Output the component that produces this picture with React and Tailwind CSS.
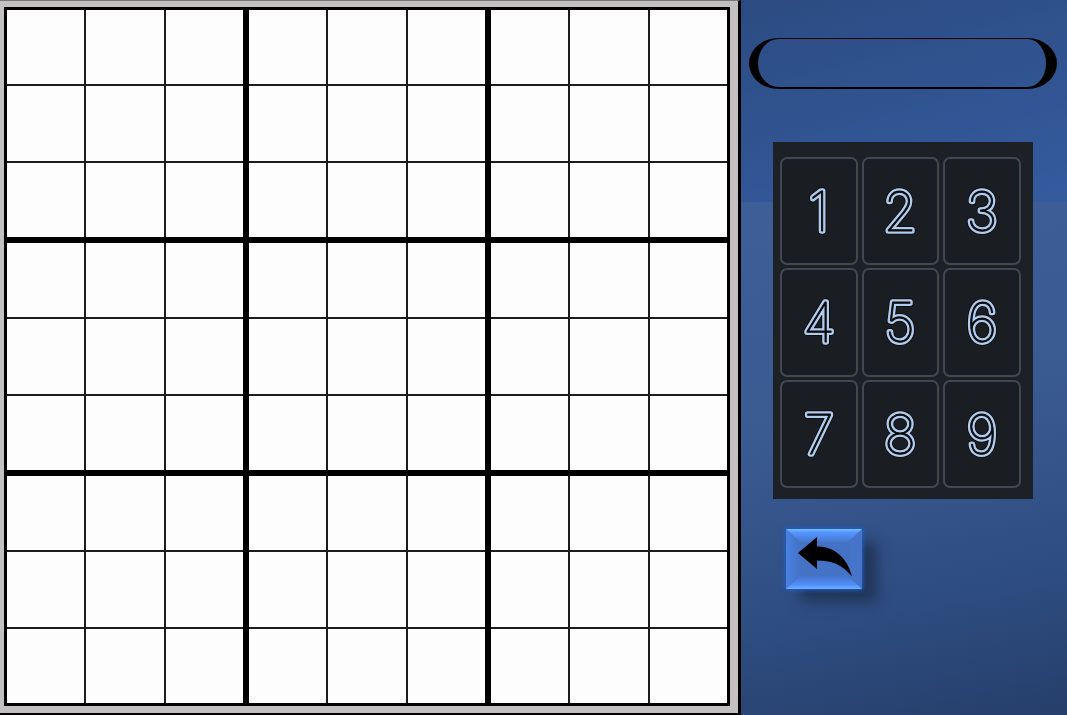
import { useState } from "react";

const THREE = [0, 1, 2];
const DIGITS = [1, 2, 3, 4, 5, 6, 7, 8, 9];

function Box({ box, values, selected, onSelect }) {
  return (
    <div className="grid min-h-0 min-w-0 grid-cols-3 grid-rows-3 gap-[2px] bg-[#1c1c1c]">
      {DIGITS.map((_, i) => {
        const row = Math.floor(box / 3) * 3 + Math.floor(i / 3);
        const col = (box % 3) * 3 + (i % 3);
        const id = row * 9 + col;
        return (
          <button
            key={id}
            type="button"
            aria-label={`Row ${row + 1}, column ${col + 1}`}
            aria-pressed={selected === id}
            onClick={() => onSelect(id)}
            className="min-h-0 min-w-0 bg-[#fdfdfd] font-['Inter',sans-serif] text-4xl text-black aria-pressed:bg-blue-100"
          >
            {values[id]}
          </button>
        );
      })}
    </div>
  );
}

function Board(props) {
  return (
    <main className="flex min-w-0 flex-1 border-t border-r-3 border-b-2 border-t-[#777] border-r-black border-b-black bg-[#c2c0c1] pt-[6px] pr-[8px] pb-[7px] pl-[4px]">
      <div className="grid flex-1 grid-cols-3 grid-rows-3 gap-[6px] border-3 border-black bg-black">
        {THREE.flatMap((r) =>
          THREE.map((c) => <Box key={r * 3 + c} box={r * 3 + c} {...props} />)
        )}
      </div>
    </main>
  );
}

// The digit is painted in layers: a dark halo, a wide light stroke, then a narrow dark core.
function NeonDigit({ digit }) {
  const id = `digit-${digit}`;
  return (
    <svg
      viewBox="0 0 48 60"
      className="h-[60px] w-12 overflow-visible font-['Inter',sans-serif] text-[54px] font-thin"
    >
      <defs>
        <text id={id} x="24" y="50" textAnchor="middle" strokeLinejoin="round">
          {digit}
        </text>
      </defs>
      <use href={`#${id}`} fill="#08090b" stroke="#08090b" strokeWidth="7" />
      <use href={`#${id}`} fill="#b0cbec" stroke="#b0cbec" strokeWidth="5.5" />
      <use href={`#${id}`} fill="#08090b" stroke="#08090b" strokeWidth="0.9" />
    </svg>
  );
}

function Keypad({ onDigit }) {
  return (
    <div className="mr-[34px] ml-8 grid h-[357px] grid-cols-3 grid-rows-3 gap-x-1 gap-y-[3px] bg-[#1d2024] pt-[15px] pr-[12px] pb-[11px] pl-[7px]">
      {DIGITS.map((d) => (
        <button
          key={d}
          type="button"
          aria-label={`${d}`}
          onClick={() => onDigit(d)}
          className="flex items-center justify-center rounded-[7px] border-2 border-[#3f4853] bg-[#1a1d21] hover:bg-[#22262c]"
        >
          <NeonDigit digit={d} />
        </button>
      ))}
    </div>
  );
}

function BackButton({ onClick }) {
  return (
    <button
      type="button"
      aria-label="Undo"
      onClick={onClick}
      className="ml-[45px] block h-[60px] w-[76px] shadow-[0_0_4px_1px_#2360c8,15px_13px_12px_0_rgba(30,45,75,0.75)]"
    >
      <svg viewBox="0 0 76 60" className="block h-full w-full" aria-hidden="true">
        <defs>
          <linearGradient id="edgeTop" x1="0" y1="0" x2="0" y2="1">
            <stop offset="0" stopColor="#74c0ff" />
            <stop offset="0.25" stopColor="#5596ff" />
            <stop offset="1" stopColor="#4678cf" />
          </linearGradient>
          <linearGradient id="edgeBottom" x1="0" y1="0" x2="0" y2="1">
            <stop offset="0" stopColor="#4474ca" />
            <stop offset="0.65" stopColor="#508dfa" />
            <stop offset="1" stopColor="#68b2ff" />
          </linearGradient>
          <linearGradient id="edgeLeft" x1="0" y1="0" x2="1" y2="0">
            <stop offset="0" stopColor="#4a82e2" />
            <stop offset="1" stopColor="#4473c8" />
          </linearGradient>
        </defs>
        <rect width="76" height="60" fill="#4472c5" />
        <path d="M0 0 13 13V47L0 60Z" fill="url(#edgeLeft)" />
        <path d="M76 0 63 13V47L76 60Z" fill="#4674c9" />
        <path d="M0 0H76L62 13H14Z" fill="url(#edgeTop)" />
        <path d="M0 60H76L62 47H14Z" fill="url(#edgeBottom)" />
        <path d="M12 24 31 8V17.5C48 17.5 61 28 66 47.5C56 35 45 31.5 31 31.5V40Z" fill="#000" />
      </svg>
    </button>
  );
}

export default function App() {
  const [moves, setMoves] = useState([]);
  const [selected, setSelected] = useState(null);
  const values = {};
  moves.forEach((m) => {
    values[m.id] = m.digit;
  });

  return (
    <div className="flex min-h-screen">
      <Board values={values} selected={selected} onSelect={setSelected} />
      <aside className="flex w-[326px] shrink-0 flex-col bg-[linear-gradient(165deg,#2c4b82_0%,#30538f_45%,#355b9f_100%),linear-gradient(168deg,#3d5e97_0%,#3a5a92_40%,#2f4f84_70%,#263f6b_100%)] bg-[size:100%_202px,100%_calc(100%-202px)] bg-[position:0_0,0_100%] bg-no-repeat pt-[38px]">
        <input
          type="text"
          readOnly
          aria-label="Message"
          className="mr-[10px] mb-[53px] ml-2 h-[51px] rounded-[30px/26px] border-t-[1px] border-r-[11px] border-b-[2px] border-l-[9px] border-black bg-transparent text-center font-['Inter',sans-serif] text-xl text-white outline-none"
        />
        <Keypad
          onDigit={(digit) => {
            if (selected !== null) setMoves([...moves, { id: selected, digit }]);
          }}
        />
        <div className="mt-[30px]">
          <BackButton onClick={() => setMoves(moves.slice(0, -1))} />
        </div>
      </aside>
    </div>
  );
}
